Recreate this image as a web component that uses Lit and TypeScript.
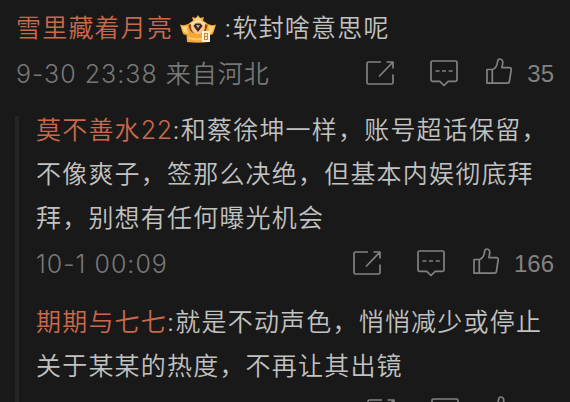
import { LitElement, css, html, nothing, svg } from 'lit';
import { customElement, property } from 'lit/decorators.js';

interface Reply {
  name: string;
  lines: string[];
  time: string;
  likes: string;
}

const replies: Reply[] = [
  {
    name: '莫不善水22',
    lines: ['和蔡徐坤一样，账号超话保留，', '不像爽子，签那么决绝，但基本内娱彻底拜', '拜，别想有任何曝光机会'],
    time: '10-1 00:09',
    likes: '166',
  },
  {
    name: '期期与七七',
    lines: ['就是不动声色，悄悄减少或停止', '关于某某的热度，不再让其出镜'],
    time: '',
    likes: '',
  },
];

const share = svg`
  <path d="M15 2H2.500Q1 2 1 3.500V22.500Q1 24 2.500 24H25.500Q27 24 27 22.500V14.500" />
  <path d="M20.500 2H27V8.500M27 2L13 16.500" />
`;

const comment = svg`
  <path d="M2.500 1H25.500Q27 1 27 2.500V20Q27 21.300 25.500 21.300H18.200L14 25.500L9.800 21.300H2.500Q1 21.300 1 20V2.500Q1 1 2.500 1Z" />
  <path d="M5.500 11H9.500M12 11H16M18.700 11H22.700" />
`;

const like = svg`
  <path d="M1 11.500H6.300C9.500 10.500 11 8 11.400 4.500C11.600 2 12.300 1 13.800 1C16.300 1 17 3.200 16.700 5.500L15.900 9.700H23.500Q25.500 9.700 25.200 11.800L23.400 23.500Q23.100 25.200 21.500 25.200H1Z" />
  <path d="M6.300 11.500V25.200" />
`;

@customElement('comment-actions')
export class CommentActions extends LitElement {
  @property() likes = '';

  static styles = css`
    :host {
      display: flex;
      align-items: flex-start;
      color: #828282;
    }

    svg {
      display: block;
      flex: none;
      width: 28px;
      height: 27px;
      fill: none;
      stroke: currentColor;
      stroke-width: 1.7;
      stroke-linejoin: round;
    }

    .share {
      margin: 2px 36px 0 0;
    }

    .comment {
      margin: 2px 28px 0 0;
    }

    .like {
      width: 26px;
    }

    .count {
      min-width: 26px;
      margin-left: 15px;
      font: 24px/32px 'Liberation Sans', Arial, sans-serif;
    }
  `;

  render() {
    return html`
      <svg class="share" viewBox="0 0 28 27">${share}</svg>
      <svg class="comment" viewBox="0 0 28 27">${comment}</svg>
      <svg class="like" viewBox="0 0 26 27">${like}</svg>
      <span class="count">${this.likes}</span>
    `;
  }
}

@customElement('crown-badge')
export class CrownBadge extends LitElement {
  static styles = css`
    :host {
      display: block;
      width: 36px;
      height: 28px;
    }

    svg {
      display: block;
    }
  `;

  render() {
    return html`
      <svg width="36" height="28" viewBox="0 0 36 28">
        <path fill="#f5a638" d="M0 9.500Q4 11 8 9L13 5.500L12 2L16 3L18 0L20 3L24 2L23 5.500L28 9Q32 11 36 9.500L33.500 17.500Q33 20 29.500 20L29 27Q18 28.500 7 27L6.500 20Q3 20 2.500 17.500Z" />
        <path fill="#ffd27c" d="M1.500 11Q5 12 8 10.500L7 15L9 19L5.500 18Q3.500 17 3 15ZM34.500 11Q31 12 28 10.500L29 15L27 19L30.500 18Q32.500 17 33 15ZM14 4L18 2L22 4L21 6H15Z" />
        <path fill="#ffc65d" d="M8 21.500Q18 25 28 21.500V24Q18 27 8 24Z" />
        <path fill="#ffe2a6" d="M10 9Q18 1.500 26 9L24 11Q18 5 12 11Z" />
        <path fill="#8a4a24" d="M8.500 10L11 9Q10 15 15 18.500Q9 17 8.500 10ZM27.500 10L25 9Q26 15 21 18.500Q27 17 27.500 10Z" />
        <ellipse cx="18" cy="13" rx="6.500" ry="6" fill="#f8c88b" />
        <path fill="#382024" d="M13.500 11L15.500 8.500H20.500L22.500 11L18 17Z" />
        <path fill="#b99b9b" d="M16 10H20L18 13.500Z" />
        <rect x="22" y="16" width="8" height="11" rx=".8" fill="#fff3da" />
        <path fill="none" stroke="#d18b38" stroke-width="1.200" d="M24.500 18.500H27.500V24.500H24.500ZM24.500 21.500H27.500" />
      </svg>
    `;
  }
}

@customElement('app-root')
export class AppRoot extends LitElement {
  static styles = css`
    :host {
      display: block;
      box-sizing: border-box;
      height: 402px;
      padding: 6px 16px 0;
      overflow: hidden;
      background: #191919;
      color: #c2c2c2;
      font: 350 25px/44px Inter, 'Noto Sans CJK SC', sans-serif;
      letter-spacing: 1.2px;
      white-space: nowrap;
    }

    .title {
      display: flex;
      align-items: center;
      height: 44px;
    }

    .name {
      color: #c9694b;
    }

    .digits {
      letter-spacing: .5px;
    }

    crown-badge {
      margin: 2px 8px 0 7px;
    }

    .meta {
      display: flex;
      justify-content: space-between;
      height: 48px;
      color: #777;
    }

    .time {
      padding-top: 2px;
      letter-spacing: 1px;
    }

    .meta comment-actions {
      padding-top: 8px;
      letter-spacing: 0;
    }

    .thread {
      display: flex;
      flex-direction: column;
      height: 300px;
      margin-top: 18px;
      margin-left: -1px;
      padding-left: 17px;
      border-left: 4px solid #252525;
    }

    .reply {
      flex: none;
      height: 192px;
    }

    /* pulls the first line's leading up to the top of the bar */
    .reply:first-child {
      margin-top: -8px;
    }

    .text {
      margin: 0;
    }

    .reply .meta {
      height: 60px;
    }
  `;

  renderName(name: string) {
    const [, text, digits] = name.match(/^(\D*)(\d*)$/)!;
    return html`<span class="name">${text}<span class="digits">${digits}</span></span>:`;
  }

  renderReply(reply: Reply) {
    return html`
      <article class="reply">
        ${reply.lines.map(
          (line, i) => html`<p class="text">${i === 0 ? this.renderName(reply.name) : nothing}${line}</p>`
        )}
        <div class="meta">
          <span class="time">${reply.time}</span>
          <comment-actions likes=${reply.likes}></comment-actions>
        </div>
      </article>
    `;
  }

  render() {
    return html`
      <div class="title">
        <span class="name">雪里藏着月亮</span>
        <crown-badge></crown-badge>
        <span>:软封啥意思呢</span>
      </div>
      <div class="meta">
        <span class="time">9-30 23:38 来自河北</span>
        <comment-actions likes="35"></comment-actions>
      </div>
      <section class="thread">${replies.map((reply) => this.renderReply(reply))}</section>
    `;
  }
}
